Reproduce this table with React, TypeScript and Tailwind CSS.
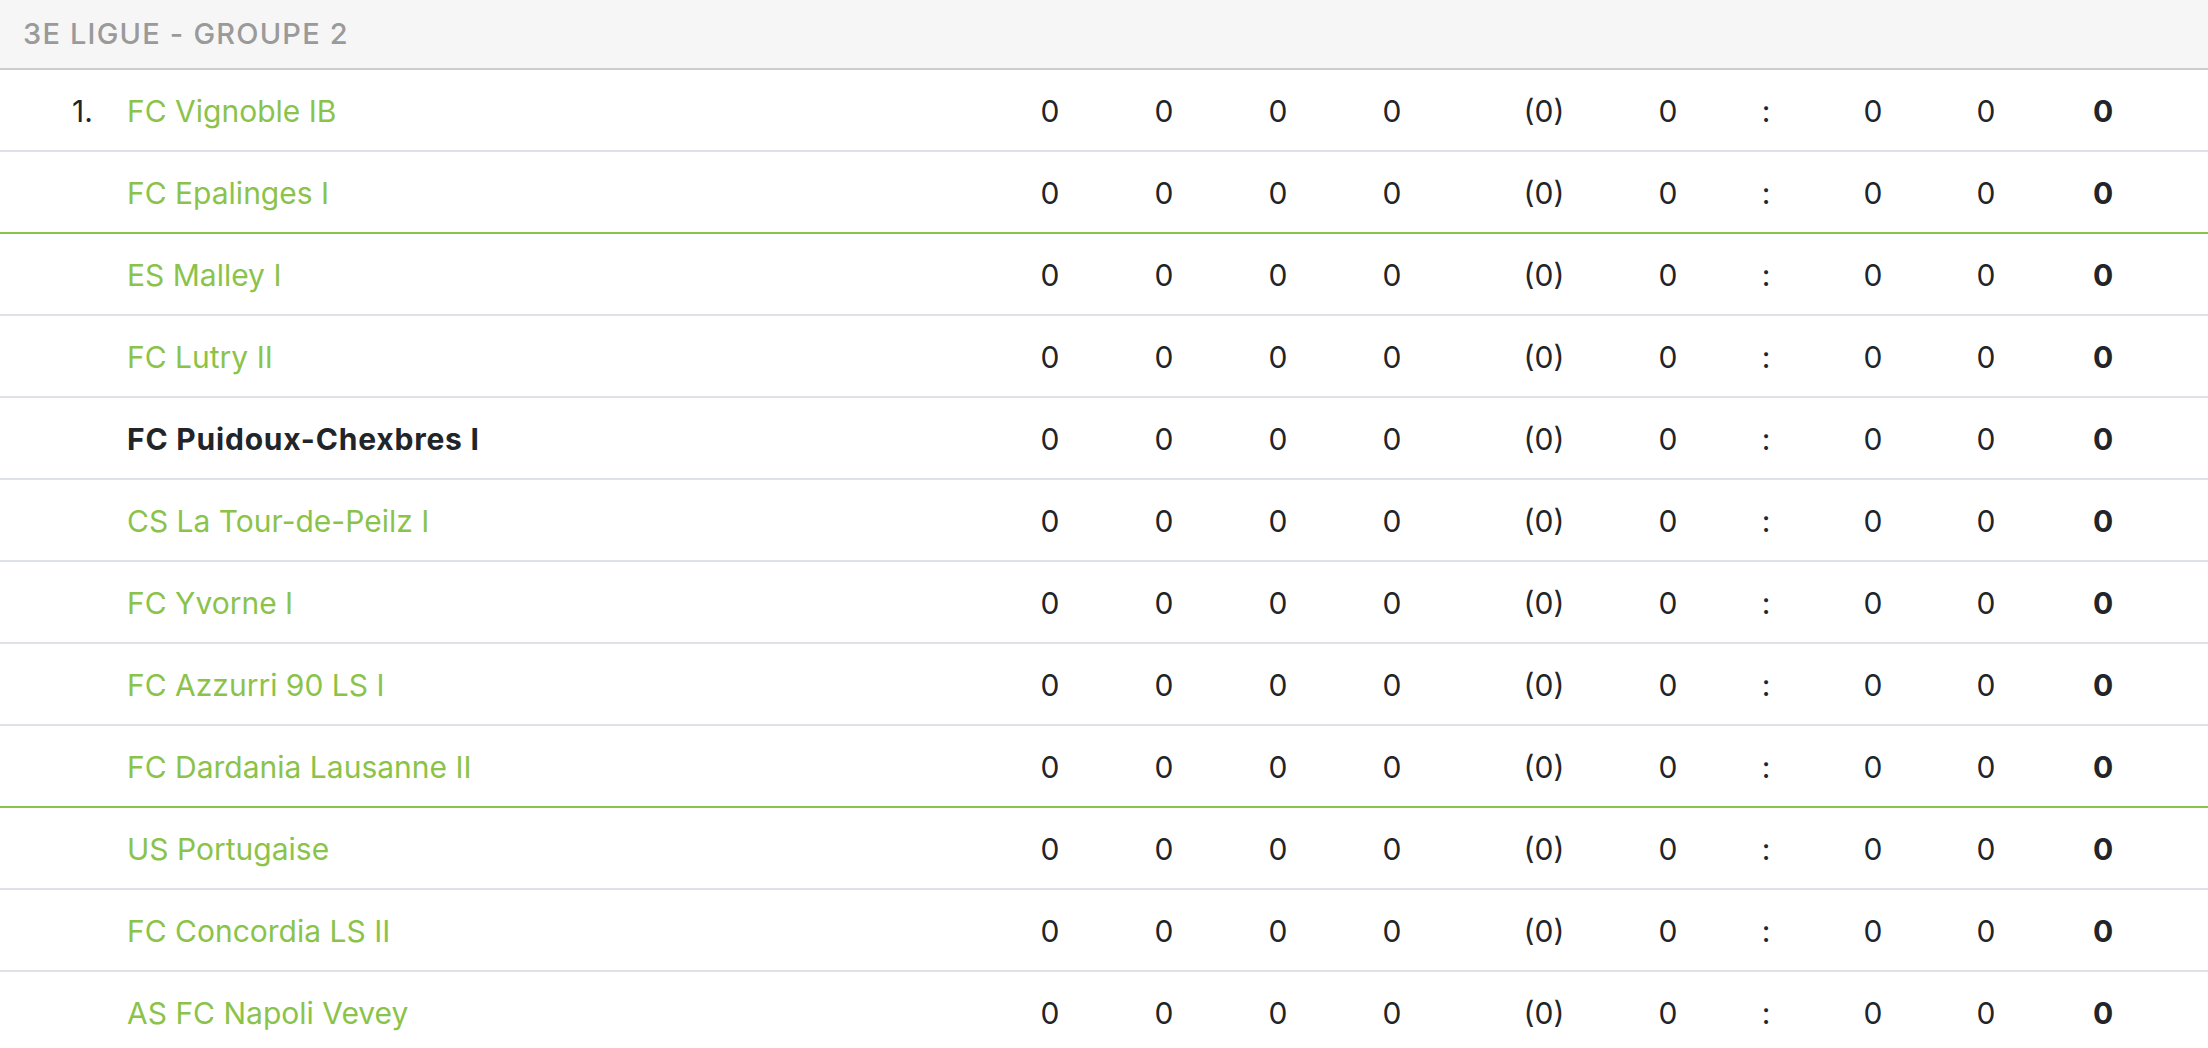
import React from "react";

const teams: { name: string; rank?: string; bold?: boolean; border: "gray" | "green" }[] = [
  { name: "FC Vignoble IB", rank: "1.", border: "gray" },
  { name: "FC Epalinges I", border: "green" },
  { name: "ES Malley I", border: "gray" },
  { name: "FC Lutry II", border: "gray" },
  { name: "FC Puidoux-Chexbres I", bold: true, border: "gray" },
  { name: "CS La Tour-de-Peilz I", border: "gray" },
  { name: "FC Yvorne I", border: "gray" },
  { name: "FC Azzurri 90 LS I", border: "gray" },
  { name: "FC Dardania Lausanne II", border: "green" },
  { name: "US Portugaise", border: "gray" },
  { name: "FC Concordia LS II", border: "gray" },
  { name: "AS FC Napoli Vevey", border: "gray" },
];

function Row({ t }: { t: (typeof teams)[number] }) {
  return (
    <div
      className={
        "flex h-[82px] items-center border-b-2 pt-[2px] text-[30px] text-[#212529] " +
        (t.border === "green" ? "border-[#8bc34a]" : "border-[#dee2e6]")
      }
    >
      <div className="w-[127px] shrink-0 pl-[72px]">{t.rank ?? ""}</div>
      <div
        className={
          "min-w-0 flex-1 whitespace-nowrap " +
          (t.bold ? "font-bold tracking-[0.8px] text-[#212529]" : "text-[#8bc34a]")
        }
      >
        {t.name}
      </div>
      <div className="w-[114px] shrink-0 text-center">0</div>
      <div className="w-[114px] shrink-0 text-center">0</div>
      <div className="w-[114px] shrink-0 text-center">0</div>
      <div className="w-[114px] shrink-0 text-center">0</div>
      <div className="w-[190px] shrink-0 text-center">(0)</div>
      <div className="w-[58px] shrink-0 text-center">0</div>
      <div className="w-[138px] shrink-0 text-center">:</div>
      <div className="w-[76px] shrink-0 text-center">0</div>
      <div className="w-[150px] shrink-0 text-center">0</div>
      <div className="w-[84px] shrink-0 text-center font-bold">0</div>
      <div className="w-[63px] shrink-0" />
    </div>
  );
}

export default function App() {
  return (
    <div
      className="h-[1048px] w-[2208px] overflow-hidden bg-white"
      style={{ fontFamily: "Inter, Roboto, sans-serif" }}
    >
      <div className="flex h-[70px] items-center border-b-2 border-[#cccccc] bg-[#f6f6f6] pl-[23px] text-[29px] font-medium uppercase tracking-[1.2px] text-[#9a9a9a]">
        3E LIGUE - GROUPE 2
      </div>
      {teams.map((t) => (
        <Row key={t.name} t={t} />
      ))}
    </div>
  );
}
